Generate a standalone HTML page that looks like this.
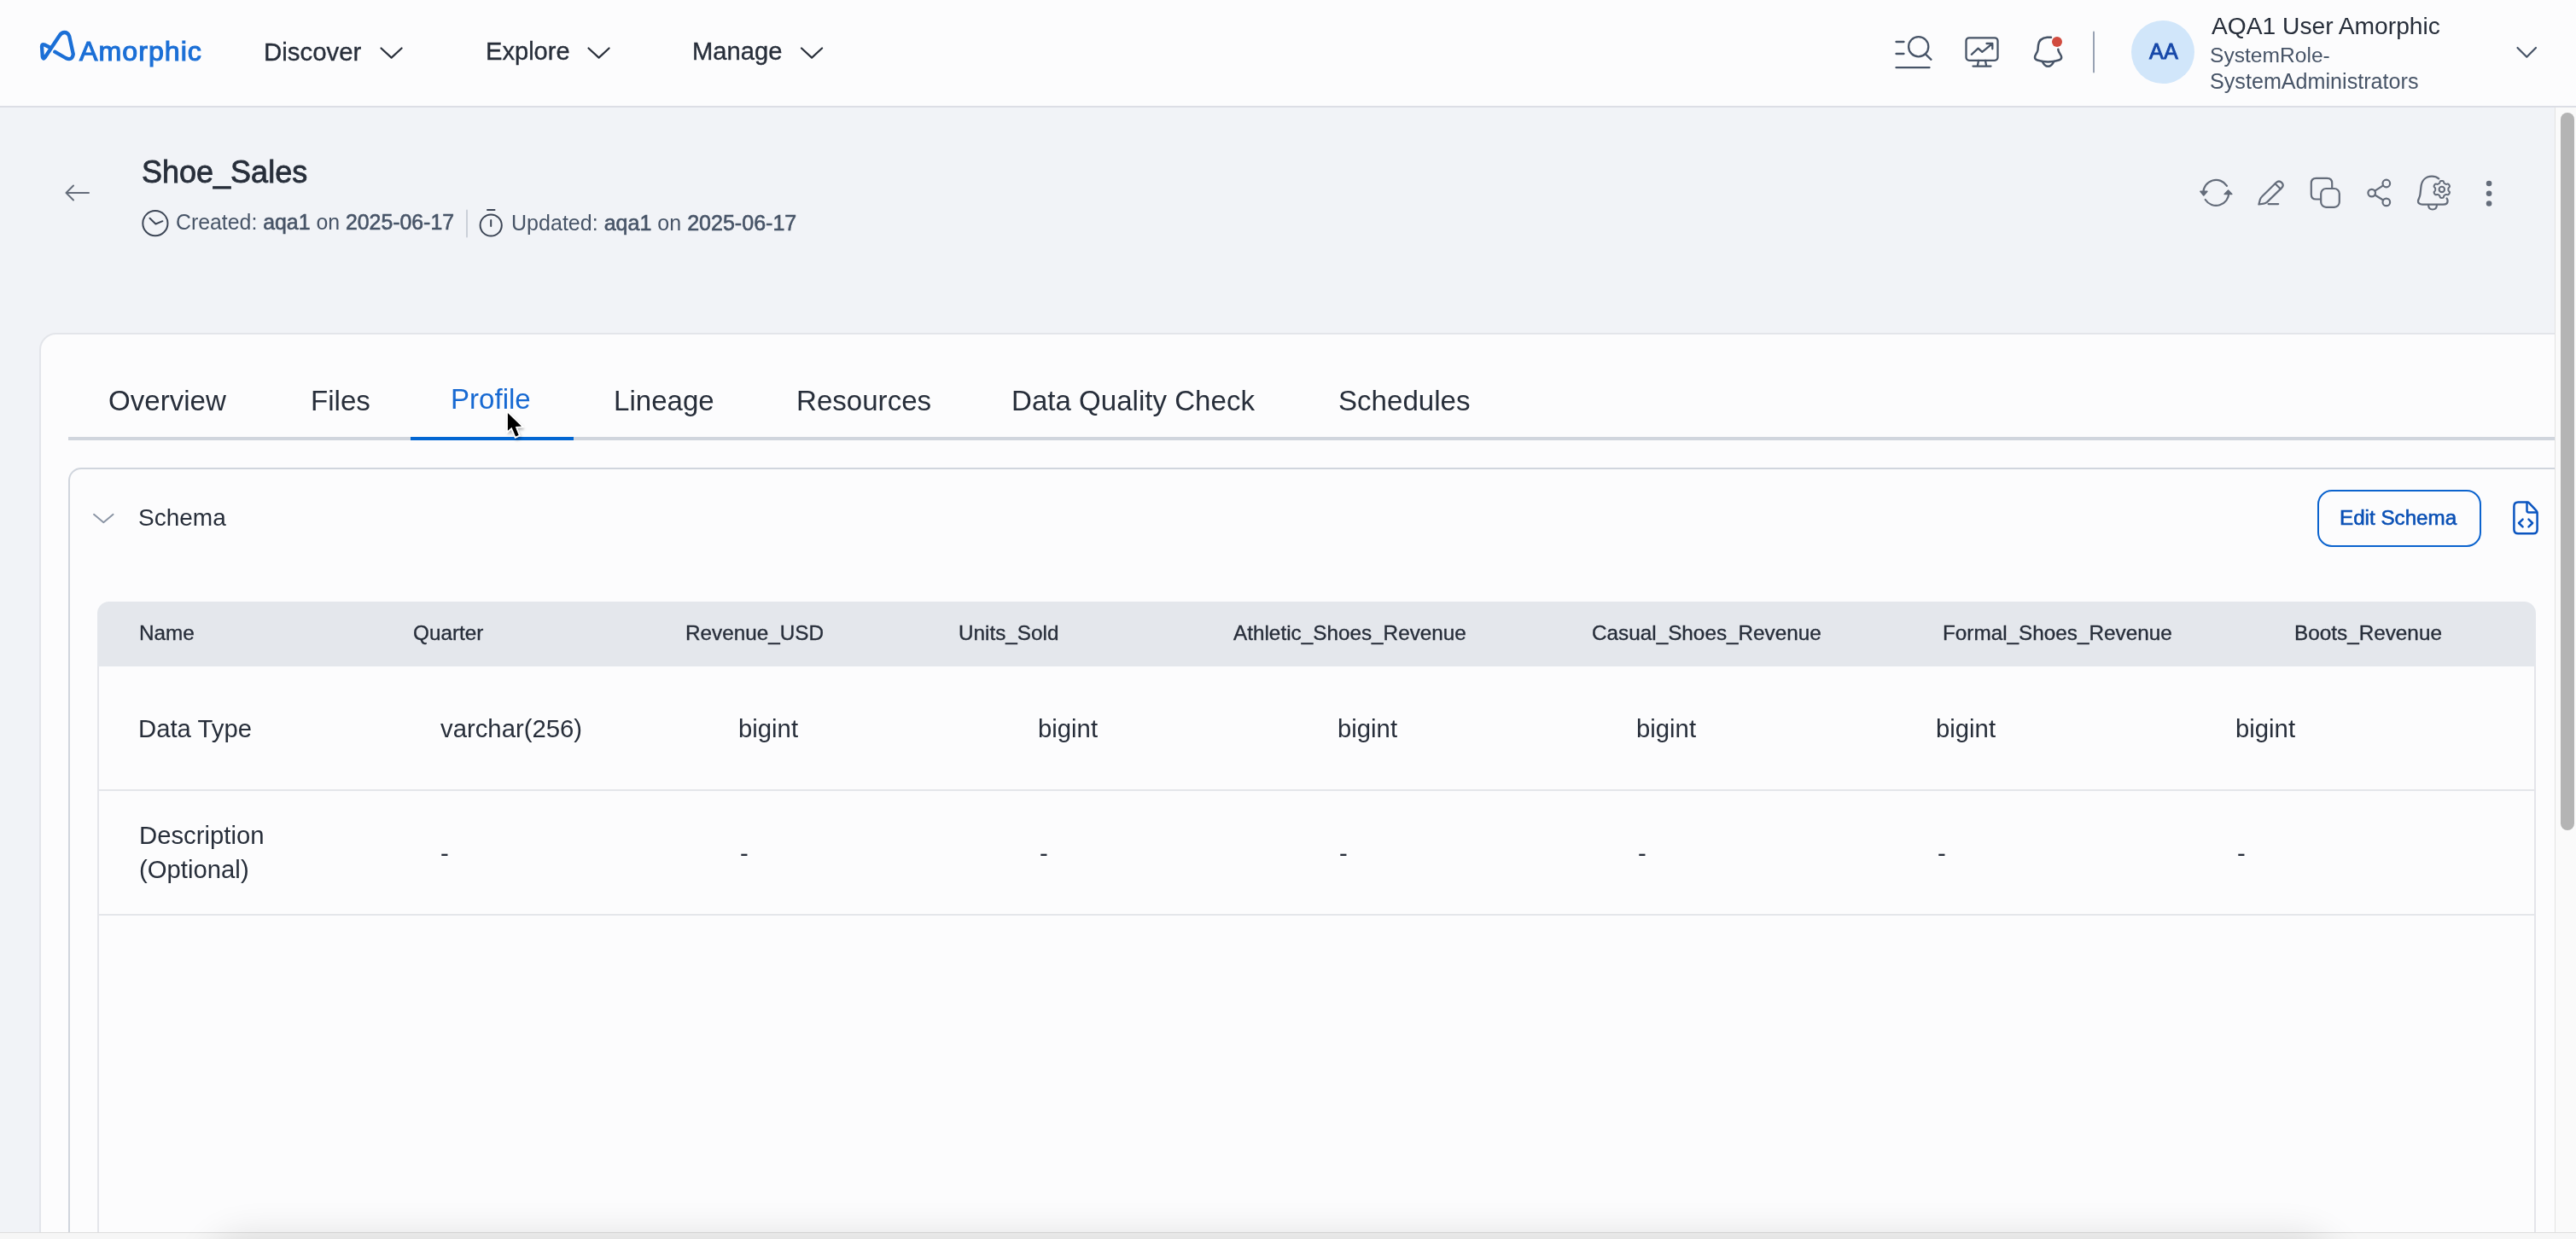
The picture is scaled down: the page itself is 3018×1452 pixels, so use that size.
<!DOCTYPE html>
<html><head><meta charset="utf-8"><title>Shoe_Sales</title>
<style>
*{margin:0;padding:0;box-sizing:border-box}
html,body{width:3018px;height:1452px;overflow:hidden;background:#f1f3f7;font-family:"Liberation Sans",sans-serif}
.t{position:absolute;white-space:nowrap;will-change:transform}
.t b{font-weight:400;-webkit-text-stroke:0.6px #475467}
.r{position:absolute}
.ov{position:absolute;left:0;top:0}
</style></head><body>
<div class="r" style="left:0;top:0;width:3018px;height:124px;background:#fcfcfd"></div>
<div class="r" style="left:0;top:124px;width:3018px;height:2px;background:#dcdee5"></div>
<div class="r" style="left:2497px;top:23.8px;width:74px;height:74px;border-radius:50%;background:#d1e6fa"></div>
<!-- outer card -->
<div class="r" style="left:46px;top:390px;width:3000px;height:1200px;background:#fcfcfd;border:2px solid #e3e5ea;border-radius:20px"></div>
<!-- tab bar -->
<div class="r" style="left:80px;top:512px;width:2940px;height:4px;background:#d0d5dd"></div>
<div class="r" style="left:481px;top:512px;width:191px;height:4px;background:#0266d2"></div>
<!-- inner card -->
<div class="r" style="left:80px;top:548px;width:2960px;height:1000px;border:2px solid #d0d5dd;border-radius:15px"></div>
<!-- edit schema button -->
<div class="r" style="left:2715px;top:574px;width:192px;height:67px;border:2px solid #0b63ce;border-radius:17px"></div>
<!-- table -->
<div class="r" style="left:114px;top:780px;width:2857px;height:800px;border-left:2px solid #e4e5ea;border-right:2px solid #e4e5ea"></div>
<div class="r" style="left:114.3px;top:705px;width:2856.5px;height:76px;background:#e4e7ec;border-radius:14px 14px 0 0"></div>
<div class="r" style="left:116px;top:925px;width:2853px;height:2px;background:#e4e6ea"></div>
<div class="r" style="left:116px;top:1071px;width:2853px;height:2px;background:#e4e6ea"></div>
<!-- bottom shadow / h-scroll -->
<div class="r" style="left:0;top:1444px;width:3018px;height:8px;background:#f6f6f6;border-top:1.5px solid #dedede"></div>
<div class="r" style="left:250px;top:1466px;width:2480px;height:80px;border-radius:40px;background:#eee;box-shadow:0 -8px 44px 10px rgba(0,0,0,0.12)"></div>
<!-- v-scrollbar -->
<div class="r" style="left:2993px;top:126px;width:25px;height:1318px;background:#fafafa;border-left:1px solid #e2e2e2"></div>
<div class="r" style="left:3000px;top:132px;width:16px;height:841px;background:#b4b4b4;border-radius:8px"></div>
<div class="t" style="left:93.24px;top:44.14px;font-size:32.2px;line-height:32.2px;color:#1b6fd6;-webkit-text-stroke:1.1px #1b6fd6;letter-spacing:1.0px;">Amorphic</div>
<div class="t" style="left:309.39px;top:45.91px;font-size:29.4px;line-height:29.4px;color:#272e3a;-webkit-text-stroke:0.35px #272e3a;">Discover</div>
<div class="t" style="left:568.61px;top:46.16px;font-size:29.1px;line-height:29.1px;color:#272e3a;-webkit-text-stroke:0.35px #272e3a;">Explore</div>
<div class="t" style="left:811.41px;top:46.08px;font-size:29.2px;line-height:29.2px;color:#272e3a;-webkit-text-stroke:0.35px #272e3a;">Manage</div>
<div class="t" style="left:2590.54px;top:16.42px;font-size:28.2px;line-height:28.2px;color:#272e3a;">AQA1 User Amorphic</div>
<div class="t" style="left:2589.47px;top:52.87px;font-size:24.6px;line-height:24.6px;color:#475467;">SystemRole-</div>
<div class="t" style="left:2589.44px;top:82.71px;font-size:25.15px;line-height:25.15px;color:#475467;">SystemAdministrators</div>
<div class="t" style="left:2517.55px;top:47.66px;font-size:25.2px;line-height:25.2px;color:#1849a9;-webkit-text-stroke:0.9px #1849a9;letter-spacing:0.3px;">AA</div>
<div class="t" style="left:165.84px;top:183.62px;font-size:36px;line-height:36px;color:#272e3a;-webkit-text-stroke:0.8px #272e3a;">Shoe_Sales</div>
<div class="t" style="left:205.96px;top:248.86px;font-size:24.85px;line-height:24.85px;color:#475467;">Created: <b>aqa1</b> on <b>2025-06-17</b></div>
<div class="t" style="left:598.75px;top:248.69px;font-size:25.05px;line-height:25.05px;color:#475467;">Updated: <b>aqa1</b> on <b>2025-06-17</b></div>
<div class="t" style="left:127.41px;top:452.97px;font-size:33.1px;line-height:33.1px;color:#272e3a;">Overview</div>
<div class="t" style="left:363.79px;top:452.97px;font-size:33.1px;line-height:33.1px;color:#272e3a;">Files</div>
<div class="t" style="left:527.99px;top:451.07px;font-size:33.1px;line-height:33.1px;color:#1769d2;">Profile</div>
<div class="t" style="left:718.89px;top:452.97px;font-size:33.1px;line-height:33.1px;color:#272e3a;">Lineage</div>
<div class="t" style="left:932.69px;top:452.97px;font-size:33.1px;line-height:33.1px;color:#272e3a;">Resources</div>
<div class="t" style="left:1185.29px;top:452.97px;font-size:33.1px;line-height:33.1px;color:#272e3a;">Data Quality Check</div>
<div class="t" style="left:1567.78px;top:452.97px;font-size:33.1px;line-height:33.1px;color:#272e3a;">Schedules</div>
<div class="t" style="left:161.81px;top:593.49px;font-size:28px;line-height:28px;color:#272e3a;">Schema</div>
<div class="t" style="left:2740.92px;top:595.41px;font-size:24.2px;line-height:24.2px;color:#0a50b5;-webkit-text-stroke:0.6px #0a50b5;">Edit Schema</div>
<div class="t" style="left:162.91px;top:730.33px;font-size:24.3px;line-height:24.3px;color:#272e3a;-webkit-text-stroke:0.35px #272e3a;">Name</div>
<div class="t" style="left:483.63px;top:730.33px;font-size:24.3px;line-height:24.3px;color:#272e3a;-webkit-text-stroke:0.35px #272e3a;">Quarter</div>
<div class="t" style="left:802.71px;top:730.33px;font-size:24.3px;line-height:24.3px;color:#272e3a;-webkit-text-stroke:0.35px #272e3a;">Revenue_USD</div>
<div class="t" style="left:1122.60px;top:730.33px;font-size:24.3px;line-height:24.3px;color:#272e3a;-webkit-text-stroke:0.35px #272e3a;">Units_Sold</div>
<div class="t" style="left:1444.95px;top:730.33px;font-size:24.3px;line-height:24.3px;color:#272e3a;-webkit-text-stroke:0.35px #272e3a;">Athletic_Shoes_Revenue</div>
<div class="t" style="left:1864.59px;top:730.33px;font-size:24.3px;line-height:24.3px;color:#272e3a;-webkit-text-stroke:0.35px #272e3a;">Casual_Shoes_Revenue</div>
<div class="t" style="left:2275.61px;top:730.33px;font-size:24.3px;line-height:24.3px;color:#272e3a;-webkit-text-stroke:0.35px #272e3a;">Formal_Shoes_Revenue</div>
<div class="t" style="left:2688.01px;top:730.33px;font-size:24.3px;line-height:24.3px;color:#272e3a;-webkit-text-stroke:0.35px #272e3a;">Boots_Revenue</div>
<div class="t" style="left:162.40px;top:838.69px;font-size:29.3px;line-height:29.3px;color:#272e3a;">Data Type</div>
<div class="t" style="left:515.68px;top:838.69px;font-size:29.3px;line-height:29.3px;color:#272e3a;">varchar(256)</div>
<div class="t" style="left:865.22px;top:838.69px;font-size:29.3px;line-height:29.3px;color:#272e3a;">bigint</div>
<div class="t" style="left:1216.12px;top:838.69px;font-size:29.3px;line-height:29.3px;color:#272e3a;">bigint</div>
<div class="t" style="left:1567.02px;top:838.69px;font-size:29.3px;line-height:29.3px;color:#272e3a;">bigint</div>
<div class="t" style="left:1917.02px;top:838.69px;font-size:29.3px;line-height:29.3px;color:#272e3a;">bigint</div>
<div class="t" style="left:2268.02px;top:838.69px;font-size:29.3px;line-height:29.3px;color:#272e3a;">bigint</div>
<div class="t" style="left:2618.92px;top:838.69px;font-size:29.3px;line-height:29.3px;color:#272e3a;">bigint</div>
<div class="t" style="left:162.60px;top:964.29px;font-size:29.3px;line-height:29.3px;color:#272e3a;">Description</div>
<div class="t" style="left:163.18px;top:1004.49px;font-size:29.3px;line-height:29.3px;color:#272e3a;">(Optional)</div>
<div class="t" style="left:515.51px;top:984.69px;font-size:29.3px;line-height:29.3px;color:#272e3a;">-</div>
<div class="t" style="left:866.81px;top:984.69px;font-size:29.3px;line-height:29.3px;color:#272e3a;">-</div>
<div class="t" style="left:1217.71px;top:984.69px;font-size:29.3px;line-height:29.3px;color:#272e3a;">-</div>
<div class="t" style="left:1568.61px;top:984.69px;font-size:29.3px;line-height:29.3px;color:#272e3a;">-</div>
<div class="t" style="left:1918.61px;top:984.69px;font-size:29.3px;line-height:29.3px;color:#272e3a;">-</div>
<div class="t" style="left:2269.61px;top:984.69px;font-size:29.3px;line-height:29.3px;color:#272e3a;">-</div>
<div class="t" style="left:2620.51px;top:984.69px;font-size:29.3px;line-height:29.3px;color:#272e3a;">-</div>

<svg class="ov" width="3018" height="1452" viewBox="0 0 3018 1452" fill="none" stroke-linecap="round" stroke-linejoin="round">
 <defs><filter id="blur1" x="-50%" y="-50%" width="200%" height="200%"><feGaussianBlur stdDeviation="1.5"/></filter></defs>
 <!-- logo -->
 <path d="M64.2,60.7 L77,68 Q84.5,71.5 85.8,63.5 L81.2,42.5 Q79.5,38 75.5,38 Q72,38 69.5,42 L52.5,67.5 Q50.5,70 49.8,66.5 L49,54.5 Q49,51 52.2,52.5 L59.5,56.2" stroke="#1b6fd6" stroke-width="4.3"/>
 <!-- nav chevrons -->
 <g stroke="#2a303b" stroke-width="2.2">
  <path d="M446.5,56.5 L458.6,67.6 L470.6,56.5"/>
  <path d="M689.5,56.5 L701.6,67.6 L713.6,56.5"/>
  <path d="M939,56.5 L951.1,67.6 L963.1,56.5"/>
 </g>
 <!-- header icons -->
 <g stroke="#475467" stroke-width="2.3">
  <path d="M2221.5,49 H2230.5 M2221.5,63 H2230.5 M2221.5,79.2 H2260.5"/>
  <circle cx="2247.7" cy="54.7" r="11.6"/>
  <path d="M2256.3,63.8 L2262.5,69.8"/>
  <rect x="2303.5" y="44.3" width="37" height="26.5" rx="3.5"/>
  <path d="M2318,71 L2316.8,77.6 M2326,71 L2327.2,77.6 M2311.5,77.6 H2332.5"/>
  <path d="M2309.8,63.8 L2317.6,56.6 L2322.3,60.8 L2334.3,51.2 M2327.5,51 H2334.3 V57.3"/>
  <path d="M2403,43.8 C2401.5,43.6 2400,43.6 2398.5,43.7 C2392,44.2 2388.6,48 2388,53 L2387.5,58.5 C2387.2,61.5 2384,64 2384,67 C2384,69 2385,70 2387,70.5 C2391,71.8 2395,72.4 2399.5,72.4 C2404,72.4 2408,71.8 2412,70.5 C2414,70 2415.2,69 2415.2,67 C2415.2,64.5 2412,62 2411.5,59 L2411.3,57.8" stroke-width="2.5"/>
  <path d="M2392.8,72 C2394.5,76 2396.8,77.8 2399.5,77.8 C2402.2,77.8 2404.5,76 2406.3,72" stroke-width="2.5"/>
  <path d="M2453,37.5 V84.5" stroke="#98a2b3" stroke-width="2"/>
 </g>
 <circle cx="2410" cy="49.1" r="6" fill="#d14b3f"/>
 <path d="M2949.5,56 L2960.3,66.8 L2971,56" stroke="#475467" stroke-width="2.2"/>
 <!-- back arrow & meta icons -->
 <path d="M104,226 H77.5 M86,217.5 L77.5,226 L86,234.5" stroke="#646c7a" stroke-width="2"/>
 <g stroke="#3d4656" stroke-width="2">
  <circle cx="181.9" cy="261.7" r="14.6"/>
  <path d="M175.5,255.7 L182.4,262.5 L190.4,259.2"/>
  <circle cx="575.2" cy="264" r="12.6"/>
  <path d="M571,246 H579.5 M575.2,258 V265"/>
 </g>
 <path d="M547,246.5 V277.5" stroke="#cbd0d8" stroke-width="2"/>
 <!-- action icons -->
 <g stroke="#646c7a" stroke-width="2.2">
  <path d="M2581.3,225.8 A15,15 0 0 1 2609,217.9"/>
  <path d="M2611.3,225.8 A15,15 0 0 1 2583.7,234"/>
  <path d="M2577.9,224.3 L2585.9,224.3 L2581.8,228.9 Z" fill="#646c7a" stroke-width="1.6"/>
  <path d="M2606.2,227.5 L2614.8,227.5 L2610.6,223 Z" fill="#646c7a" stroke-width="1.6"/>
  <path d="M2646.4,239.5 L2647.9,233.8 Q2648.5,231.8 2650.2,230.2 L2666.7,214 Q2670.1,210.9 2673.3,214.1 Q2676.3,217.3 2673,220.4 L2656,236.9 Q2654.3,238.4 2652.2,238.6 Z"/>
  <path d="M2665.6,215.2 L2671.9,221.5"/>
  <path d="M2657.6,239.1 H2669.2"/>
  <path d="M2719,233.5 H2713.5 C2710,233.5 2707.8,231.2 2707.8,227.7 V214.7 C2707.8,211.2 2710,208.9 2713.5,208.9 H2726.5 C2730,208.9 2732.2,211.2 2732.2,214.7 V220.8"/>
  <rect x="2719.2" y="221" width="21.6" height="21.8" rx="6"/>
  <circle cx="2795.8" cy="215" r="4.3"/>
  <circle cx="2778.7" cy="226.1" r="4.3"/>
  <circle cx="2795.8" cy="236.9" r="4.3"/>
  <path d="M2782.4,223.7 L2792.1,217.4 M2782.4,228.5 L2792.1,234.5"/>
  <path d="M2857.2,209.4 C2855,207.5 2852,206.7 2849.2,206.7 C2841,206.7 2836.9,212.5 2836.3,220 L2835.5,227.5 C2835.1,231.2 2833.2,233.5 2833,235.4 C2832.8,238 2834.8,239.6 2838,239.6 H2862.5 C2865.5,239.6 2867.6,238 2867.6,235.4 C2867.6,234.2 2867.2,233.2 2866.6,232.5" stroke-width="2.3"/>
  <path d="M2845,240.3 C2845.2,243.5 2847.3,245.5 2850,245.5 C2852.7,245.5 2854.8,243.5 2855,240.3"/>
  <path d="M2860.80,211.90 L2861.15,211.91 L2861.50,211.94 L2861.84,211.99 L2862.18,212.09 L2862.50,212.26 L2862.78,212.58 L2863.00,213.09 L2863.15,213.71 L2863.29,214.22 L2863.47,214.56 L2863.68,214.77 L2863.91,214.92 L2864.14,215.06 L2864.37,215.19 L2864.60,215.32 L2864.83,215.45 L2865.06,215.59 L2865.29,215.72 L2865.54,215.84 L2865.82,215.91 L2866.20,215.90 L2866.72,215.77 L2867.33,215.59 L2867.88,215.52 L2868.30,215.61 L2868.61,215.80 L2868.86,216.04 L2869.08,216.32 L2869.28,216.60 L2869.46,216.90 L2869.63,217.21 L2869.78,217.52 L2869.90,217.85 L2869.99,218.19 L2869.99,218.55 L2869.86,218.96 L2869.53,219.40 L2869.07,219.84 L2868.70,220.22 L2868.50,220.54 L2868.42,220.83 L2868.40,221.10 L2868.40,221.37 L2868.40,221.63 L2868.40,221.90 L2868.40,222.17 L2868.40,222.43 L2868.40,222.70 L2868.42,222.97 L2868.50,223.26 L2868.70,223.58 L2869.07,223.96 L2869.53,224.40 L2869.86,224.84 L2869.99,225.25 L2869.99,225.61 L2869.90,225.95 L2869.78,226.28 L2869.63,226.59 L2869.46,226.90 L2869.28,227.20 L2869.08,227.48 L2868.86,227.76 L2868.61,228.00 L2868.30,228.19 L2867.88,228.28 L2867.33,228.21 L2866.72,228.03 L2866.20,227.90 L2865.82,227.89 L2865.54,227.96 L2865.29,228.08 L2865.06,228.21 L2864.83,228.35 L2864.60,228.48 L2864.37,228.61 L2864.14,228.74 L2863.91,228.88 L2863.68,229.03 L2863.47,229.24 L2863.29,229.58 L2863.15,230.09 L2863.00,230.71 L2862.78,231.22 L2862.50,231.54 L2862.18,231.71 L2861.84,231.81 L2861.50,231.86 L2861.15,231.89 L2860.80,231.90 L2860.45,231.89 L2860.10,231.86 L2859.76,231.81 L2859.42,231.71 L2859.10,231.54 L2858.82,231.22 L2858.60,230.71 L2858.45,230.09 L2858.31,229.58 L2858.13,229.24 L2857.92,229.03 L2857.69,228.88 L2857.46,228.74 L2857.23,228.61 L2857.00,228.48 L2856.77,228.35 L2856.54,228.21 L2856.31,228.08 L2856.06,227.96 L2855.78,227.89 L2855.40,227.90 L2854.88,228.03 L2854.27,228.21 L2853.72,228.28 L2853.30,228.19 L2852.99,228.00 L2852.74,227.76 L2852.52,227.48 L2852.32,227.20 L2852.14,226.90 L2851.97,226.59 L2851.82,226.28 L2851.70,225.95 L2851.61,225.61 L2851.61,225.25 L2851.74,224.84 L2852.07,224.40 L2852.53,223.96 L2852.90,223.58 L2853.10,223.26 L2853.18,222.97 L2853.20,222.70 L2853.20,222.43 L2853.20,222.17 L2853.20,221.90 L2853.20,221.63 L2853.20,221.37 L2853.20,221.10 L2853.18,220.83 L2853.10,220.54 L2852.90,220.22 L2852.53,219.84 L2852.07,219.40 L2851.74,218.96 L2851.61,218.55 L2851.61,218.19 L2851.70,217.85 L2851.82,217.52 L2851.97,217.21 L2852.14,216.90 L2852.32,216.60 L2852.52,216.32 L2852.74,216.04 L2852.99,215.80 L2853.30,215.61 L2853.72,215.52 L2854.27,215.59 L2854.88,215.77 L2855.40,215.90 L2855.78,215.91 L2856.06,215.84 L2856.31,215.72 L2856.54,215.59 L2856.77,215.45 L2857.00,215.32 L2857.23,215.19 L2857.46,215.06 L2857.69,214.92 L2857.92,214.77 L2858.13,214.56 L2858.31,214.22 L2858.45,213.71 L2858.60,213.09 L2858.82,212.58 L2859.10,212.26 L2859.42,212.09 L2859.76,211.99 L2860.10,211.94 L2860.45,211.91 Z" stroke-width="2"/>
  <circle cx="2860.8" cy="221.9" r="3.2" stroke-width="2.1"/>
 </g>
 <g fill="#646c7a">
  <circle cx="2916.1" cy="215" r="3.3"/>
  <circle cx="2916.1" cy="226.7" r="3.3"/>
  <circle cx="2916.1" cy="238.5" r="3.3"/>
 </g>
 <!-- schema chevron -->
 <path d="M110,602.8 L121.3,612.3 L132.6,602.8" stroke="#8a94a4" stroke-width="1.9"/>
 <!-- file code icon -->
 <g stroke="#0b55c0" stroke-width="2.5">
  <path d="M2961,588.6 H2950.3 C2947.2,588.6 2945.4,590.4 2945.4,593.5 V620.5 C2945.4,623.6 2947.2,625.3 2950.3,625.3 H2968 C2971,625.3 2972.6,623.6 2972.6,620.5 V601.5 C2972.6,600 2972,598.8 2971,597.8 L2963.2,589.6 C2962.5,588.9 2962,588.6 2961,588.6 Z"/>
  <path d="M2960.5,589 V598.5 C2960.5,599.8 2961.2,600.4 2962.5,600.4 H2972.3"/>
  <path d="M2955.6,608.6 L2951,613 L2955.6,617.4 M2962.5,608.6 L2967.1,613 L2962.5,617.4"/>
 </g>
 <!-- cursor -->
 <path d="M596.2,486.5 L596.2,507.5 L600.8,503.5 L605.5,514.3 L609.1,512.7 L604.9,502.3 L612.2,502.3 Z" fill="rgba(0,0,0,0.18)" stroke="rgba(0,0,0,0.18)" stroke-width="4" filter="url(#blur1)"/>
 <path d="M594.9,484 L594.9,504.8 L599.5,500.8 L604.1,511.6 L607.7,510 L603.8,500 L610.9,499.5 Z" fill="#000" stroke="#fff" stroke-width="3.6" stroke-linejoin="miter" paint-order="stroke"/>
</svg>

</body></html>
